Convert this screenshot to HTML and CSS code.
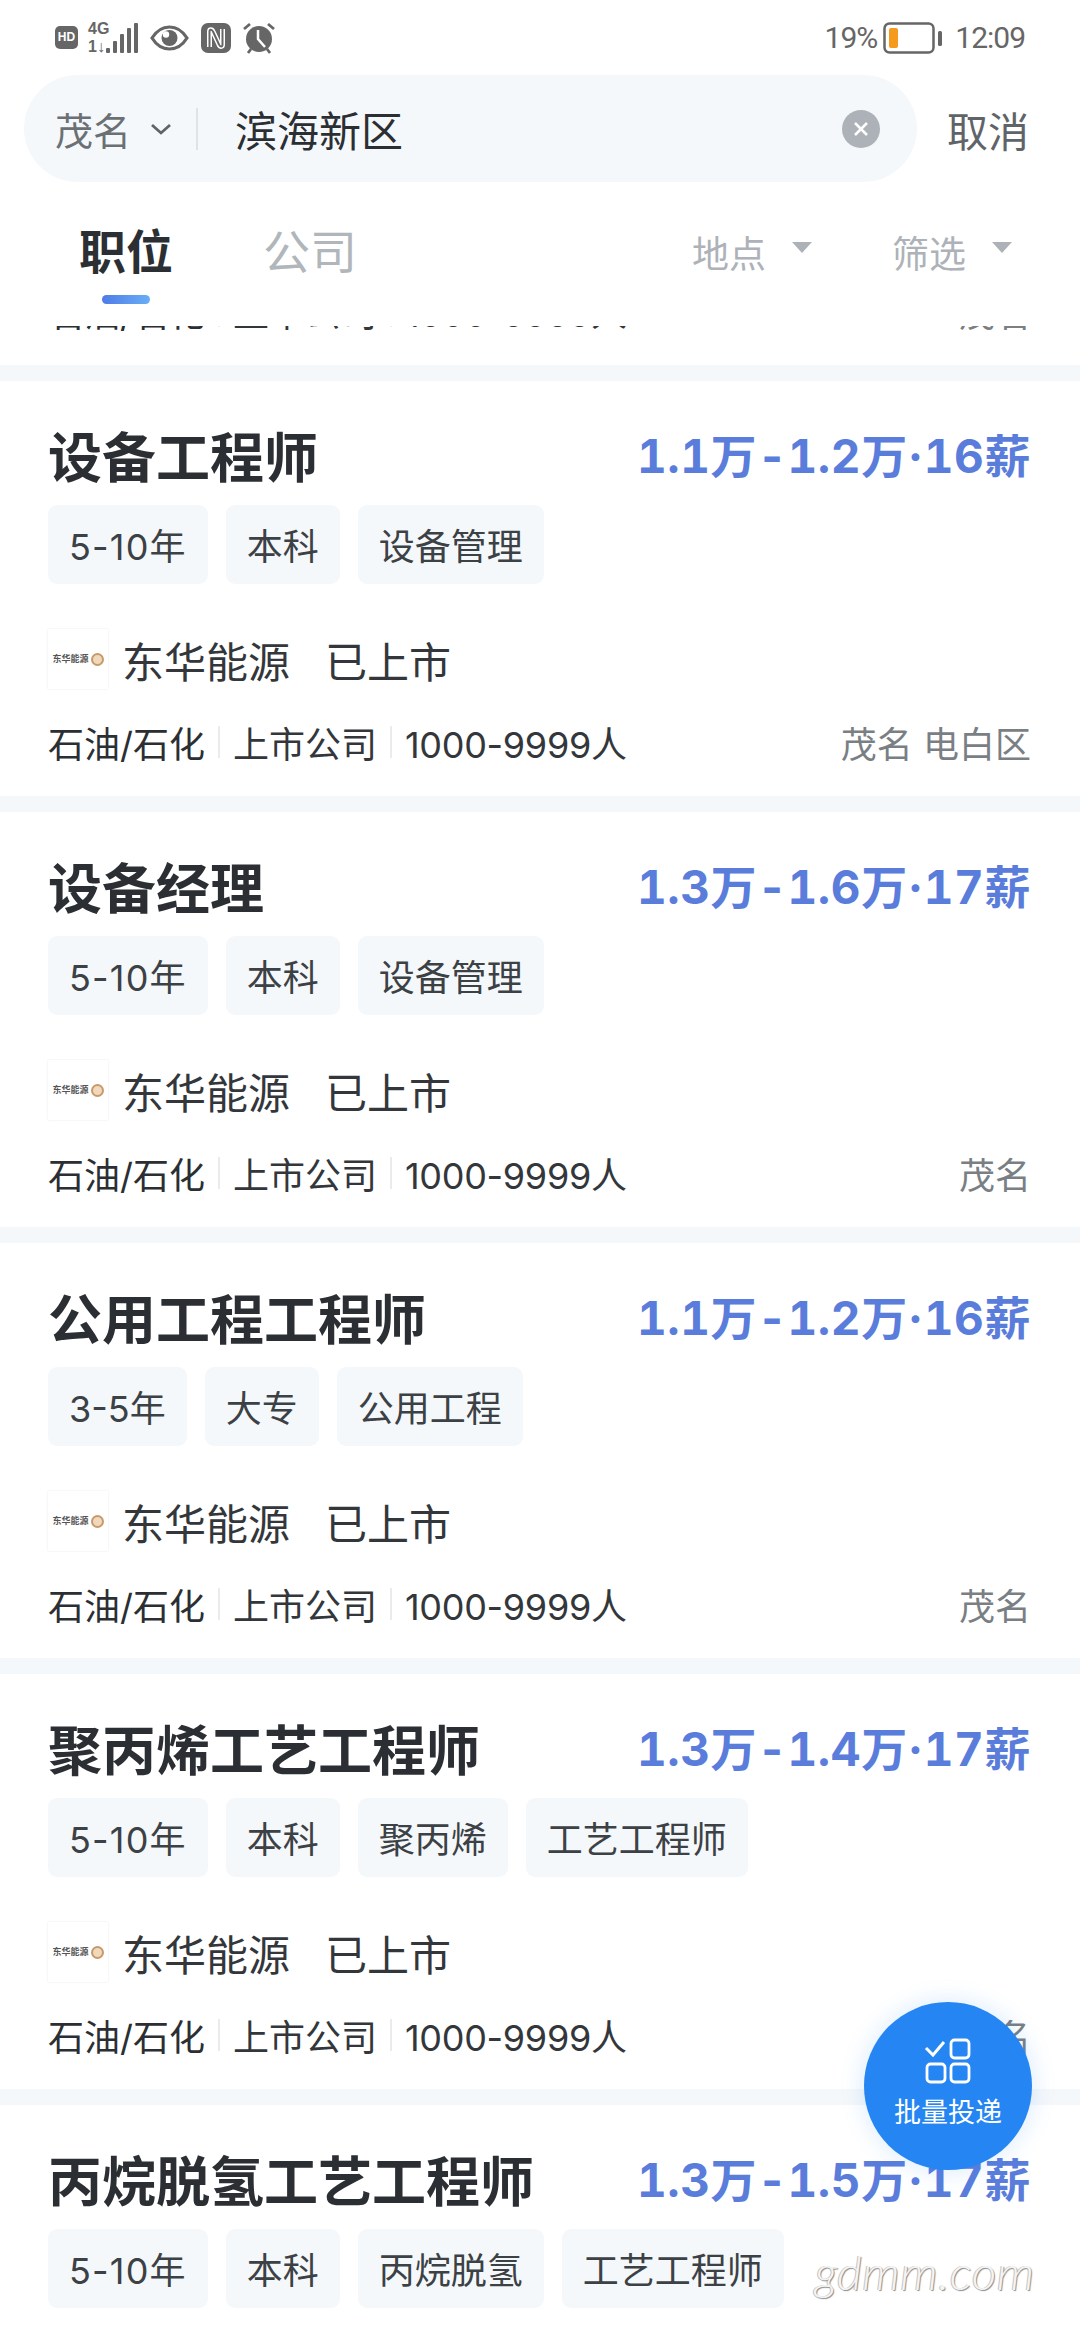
FILE: index.html
```html
<!DOCTYPE html>
<html lang="zh">
<head>
<meta charset="utf-8">
<title>职位搜索</title>
<link rel="stylesheet" href="styles.css">
</head>
<body>
<div class="page">
  <header class="head">
    <div class="status">
      <div class="status-left">
        <span class="hd">HD</span>
        <span class="net"><span class="net-t">4G</span><span class="net-b">1↓</span></span>
        <svg class="sig" width="33" height="30" viewBox="0 0 33 30"><rect x="0" y="25" width="4" height="5" rx="1" fill="#666"/><rect x="7" y="18" width="4" height="12" rx="1" fill="#666"/><rect x="14" y="11" width="4" height="19" rx="1" fill="#666"/><rect x="21" y="5" width="4" height="25" rx="1" fill="#666"/><rect x="28" y="0" width="4" height="30" rx="1" fill="#666"/></svg>
        <svg class="ic-eye" width="39" height="26" viewBox="0 0 39 26"><path d="M2 13C7 5 13 2 19.500 2S32 5 37 13C32 21 26 24 19.500 24S7 21 2 13Z" fill="none" stroke="#666" stroke-width="3.200"/><circle cx="19.500" cy="13" r="8" fill="#666"/><circle cx="16" cy="9.500" r="3.200" fill="#fff"/></svg>
        <svg class="ic-nfc" width="30" height="30" viewBox="0 0 30 30"><rect width="30" height="30" rx="7" fill="#666"/><path d="M8.500 24V8.500C8.500 6 11 6 12 8.500L18 21.500C19 24 21.500 24 21.500 21.500V6" fill="none" stroke="#fff" stroke-width="5"/><path d="M8.500 24V8.500C8.500 6 11 6 12 8.500L18 21.500C19 24 21.500 24 21.500 21.500V6" fill="none" stroke="#666" stroke-width="2"/></svg>
        <svg class="ic-alarm" width="34" height="32" viewBox="0 0 34 32"><circle cx="17" cy="17" r="13" fill="#666"/><path d="M16 8V17L23 25" fill="none" stroke="#fff" stroke-width="2.500"/><path d="M2 7L8 2M32 7L26 2M6 31L9 27M28 31L25 27" stroke="#666" stroke-width="2.800"/></svg>
      </div>
      <div class="status-right">
        <span class="pct">19%</span>
        <svg width="60" height="32" viewBox="0 0 60 32"><rect x="1.500" y="1.500" width="49" height="29" rx="5" fill="none" stroke="#666" stroke-width="2.500"/><rect x="6" y="6" width="9" height="20" rx="2" fill="#f59a1c"/><rect x="55" y="9" width="4" height="15" rx="1.500" fill="#666"/></svg>
        <span class="clock">12:09</span>
      </div>
    </div>
    <div class="search-row">
      <div class="search">
        <span class="city">茂名</span>
        <svg class="chev" width="22" height="12" viewBox="0 0 22 12"><path d="M2 2L11 10L20 2" fill="none" stroke="#5f6468" stroke-width="2.800"/></svg>
        <span class="sep"></span>
        <span class="query">滨海新区</span>
        <svg class="clear" width="38" height="38" viewBox="0 0 38 38"><circle cx="19" cy="19" r="19" fill="#adb2b8"/><path d="M13 13L25 25M25 13L13 25" stroke="#fff" stroke-width="2.500"/></svg>
      </div>
      <span class="cancel">取消</span>
    </div>
    <div class="tabs">
      <div class="tab tab-on"><span>职位</span><i class="tab-line"></i></div>
      <div class="tab"><span>公司</span></div>
      <div class="filters">
        <span class="filter">地点</span><i class="caret"></i>
        <span class="filter filter-b">筛选</span><i class="caret"></i>
      </div>
    </div>
  </header>

  <main class="list">
    <article class="card card-cut">
      <div class="top"><h2 class="title">设备工程师</h2><span class="pay">1.1万-1.2万·16薪</span></div>
      <div class="tags"><span class="tag tag-wide">5-10年</span><span class="tag">本科</span><span class="tag">设备管理</span></div>
      <div class="co"><span class="logo"><b>东华能源</b><i></i></span><span class="co-name">东华能源</span><span class="co-stage">已上市</span></div>
      <div class="meta"><span class="m1">石油/石化</span><i class="bar"></i><span>上市公司</span><i class="bar"></i><span class="size">1000-9999人</span><span class="loc">茂名</span></div>
    </article>

    <article class="card">
      <div class="top"><h2 class="title">设备工程师</h2><span class="pay">1.1万-1.2万·16薪</span></div>
      <div class="tags"><span class="tag tag-wide">5-10年</span><span class="tag">本科</span><span class="tag">设备管理</span></div>
      <div class="co"><span class="logo"><b>东华能源</b><i></i></span><span class="co-name">东华能源</span><span class="co-stage">已上市</span></div>
      <div class="meta"><span class="m1">石油/石化</span><i class="bar"></i><span>上市公司</span><i class="bar"></i><span class="size">1000-9999人</span><span class="loc">茂名 电白区</span></div>
    </article>

    <article class="card">
      <div class="top"><h2 class="title">设备经理</h2><span class="pay">1.3万-1.6万·17薪</span></div>
      <div class="tags"><span class="tag tag-wide">5-10年</span><span class="tag">本科</span><span class="tag">设备管理</span></div>
      <div class="co"><span class="logo"><b>东华能源</b><i></i></span><span class="co-name">东华能源</span><span class="co-stage">已上市</span></div>
      <div class="meta"><span class="m1">石油/石化</span><i class="bar"></i><span>上市公司</span><i class="bar"></i><span class="size">1000-9999人</span><span class="loc">茂名</span></div>
    </article>

    <article class="card">
      <div class="top"><h2 class="title">公用工程工程师</h2><span class="pay">1.1万-1.2万·16薪</span></div>
      <div class="tags"><span class="tag">3-5年</span><span class="tag">大专</span><span class="tag">公用工程</span></div>
      <div class="co"><span class="logo"><b>东华能源</b><i></i></span><span class="co-name">东华能源</span><span class="co-stage">已上市</span></div>
      <div class="meta"><span class="m1">石油/石化</span><i class="bar"></i><span>上市公司</span><i class="bar"></i><span class="size">1000-9999人</span><span class="loc">茂名</span></div>
    </article>

    <article class="card">
      <div class="top"><h2 class="title">聚丙烯工艺工程师</h2><span class="pay">1.3万-1.4万·17薪</span></div>
      <div class="tags"><span class="tag tag-wide">5-10年</span><span class="tag">本科</span><span class="tag">聚丙烯</span><span class="tag">工艺工程师</span></div>
      <div class="co"><span class="logo"><b>东华能源</b><i></i></span><span class="co-name">东华能源</span><span class="co-stage">已上市</span></div>
      <div class="meta"><span class="m1">石油/石化</span><i class="bar"></i><span>上市公司</span><i class="bar"></i><span class="size">1000-9999人</span><span class="loc">茂名</span></div>
    </article>

    <article class="card">
      <div class="top"><h2 class="title">丙烷脱氢工艺工程师</h2><span class="pay">1.3万-1.5万·17薪</span></div>
      <div class="tags"><span class="tag tag-wide">5-10年</span><span class="tag">本科</span><span class="tag">丙烷脱氢</span><span class="tag">工艺工程师</span></div>
    </article>
  </main>

  <div class="fab">
    <svg width="48" height="46" viewBox="0 0 48 46"><path d="M2 10L9 17L20 4" fill="none" stroke="#fff" stroke-width="3"/><rect x="27" y="2" width="18" height="18" rx="3.500" fill="none" stroke="#fff" stroke-width="2.800"/><rect x="3" y="26" width="18" height="18" rx="3.500" fill="none" stroke="#fff" stroke-width="2.800"/><rect x="27" y="26" width="18" height="18" rx="3.500" fill="none" stroke="#fff" stroke-width="2.800"/></svg>
    <span class="fab-t">批量投递</span>
  </div>
  <div class="mark">gdmm.com</div>
</div>
</body>
</html>
```

FILE: styles.css
```css
* { box-sizing: border-box; margin: 0; padding: 0; }
html, body { background: #fff; }
body { width: 1080px; height: 2340px; overflow: hidden; font-family: Inter, "Noto Sans CJK SC", sans-serif; color: #2b2f33; }
i { font-style: normal; display: block; }
.page { position: relative; width: 1080px; height: 2340px; overflow: hidden; display: flex; flex-direction: column; }
.head { flex: none; height: 326px; display: flex; flex-direction: column; background: #fff; position: relative; z-index: 1; }

.status { height: 75px; display: flex; justify-content: space-between; align-items: center; padding: 0 55px 0 55px; }
.status-left { display: flex; align-items: center; }
.hd { width: 23px; height: 23px; border-radius: 5px; background: #666; color: #fff; font: 700 12px/23px "Liberation Sans", sans-serif; text-align: center; }
.net { width: 18px; margin-left: 10px; display: flex; flex-direction: column; gap: 5px; color: #666; font: 700 16px/13px "Liberation Sans Narrow", "Liberation Sans", sans-serif; }
.net-t, .net-b { display: block; white-space: nowrap; }
.ic-eye { margin-left: 11px; }
.ic-nfc { margin-left: 12px; }
.ic-alarm { margin-left: 11px; }
.status-right { display: flex; align-items: center; color: #666; font-family: Roboto, sans-serif; font-size: 30px; letter-spacing: -1px; }
.status-right svg { margin: 0 12px 0 6px; }

.search-row { height: 107px; display: flex; align-items: center; padding: 0 51px 0 24px; justify-content: space-between; }
.search { width: 893px; height: 107px; border-radius: 54px; background: #f5f8fa; display: flex; align-items: center; padding: 0 37px 0 31px; }
.city { font-size: 38px; color: #6b7075; }
.chev { margin-left: 19px; }
.sep { width: 2px; height: 42px; background: #dfe3e6; margin-left: 24px; }
.query { font-size: 42px; color: #2b2f33; margin-left: 37px; flex: 1; }
.cancel { font-size: 41px; color: #5f6468; }

.tabs { flex: 1; display: flex; align-items: flex-start; padding: 36px 68px 0 79px; }
.tab { width: 94px; margin-right: 90px; display: flex; flex-direction: column; align-items: center; font-size: 47px; line-height: 68px; color: #b1b6bb; white-space: nowrap; }
.tab-on { color: #2b2f33; font-weight: 700; }
.tab-line { width: 48px; height: 9px; margin-top: 9px; border-radius: 5px; background: linear-gradient(90deg, #4f7be8, #69aef5); }
.filters { margin-left: auto; display: flex; align-items: center; height: 68px; }
.filter { font-size: 37px; color: #adb2b9; }
.filter-b { margin-left: 80px; }
.caret { width: 0; height: 0; margin: -10px 0 0 26px; border-left: 10px solid transparent; border-right: 10px solid transparent; border-top: 11px solid #adb2b9; }

.list { flex: 1; min-height: 0; overflow: hidden; display: flex; flex-direction: column; background: #f5f8fa; }
.card { flex: none; height: 415px; margin-bottom: 16px; background: #fff; padding: 46px 49px 0 48px; }
.card-cut { margin-top: -376px; }
.top { height: 64px; display: flex; justify-content: space-between; align-items: flex-start; }
.title { font-size: 54px; line-height: 64px; font-weight: 700; color: #2b2f33; }
.pay { font-size: 46px; line-height: 58px; font-weight: 700; font-variant-numeric: tabular-nums; letter-spacing: .6px; color: #5a7ddc; white-space: nowrap; }
.tags { display: flex; gap: 18px; margin-top: 14px; }
.tag { height: 79px; border-radius: 9px; background: #f5f8fa; padding: 0 21px; font-size: 36px; line-height: 85px; color: #3c4145; white-space: nowrap; }
.tag-wide { letter-spacing: 1.200px; }
.co { display: flex; align-items: center; height: 60px; margin-top: 45px; font-size: 42px; color: #33373b; }
.logo { width: 60px; height: 60px; display: flex; align-items: center; justify-content: center; gap: 2px; background: #fff; box-shadow: 0 0 2px #e8e8e8; }
.logo b { font-size: 9px; line-height: 12px; font-weight: 700; color: #555; white-space: nowrap; }
.logo i { width: 13px; height: 13px; border-radius: 50%; background: #f0d8bd; border: 2px solid #c99a68; }
.co-name { margin-left: 14px; }
.co-stage { margin-left: 35px; }
.meta { display: flex; align-items: center; height: 42px; margin-top: 32px; font-size: 36px; color: #33373b; white-space: nowrap; }
.m1 { color: #2b2f33; }
.size { letter-spacing: -.3px; }
.bar { width: 2px; height: 32px; background: #e9ebed; margin: 0 13px; }
.loc { margin-left: auto; color: #7a7f84; }

.fab { position: absolute; left: 864px; top: 2002px; width: 168px; height: 168px; border-radius: 50%; background: #2485f3; box-shadow: 0 0 24px rgba(36,133,243,.18); color: #fff; display: flex; flex-direction: column; align-items: center; padding-top: 36px; z-index: 2; }
.fab-t { font-size: 27px; line-height: 38px; margin-top: 10px; white-space: nowrap; }
.mark { position: absolute; left: 815px; top: 2240px; font: italic 300 48px/64px Lato, sans-serif; letter-spacing: .5px; color: #f4f4f4; text-shadow: 1px 1px 1px #8a8a8a, -1px 0 0 #c4c4c4; z-index: 2; }
```
